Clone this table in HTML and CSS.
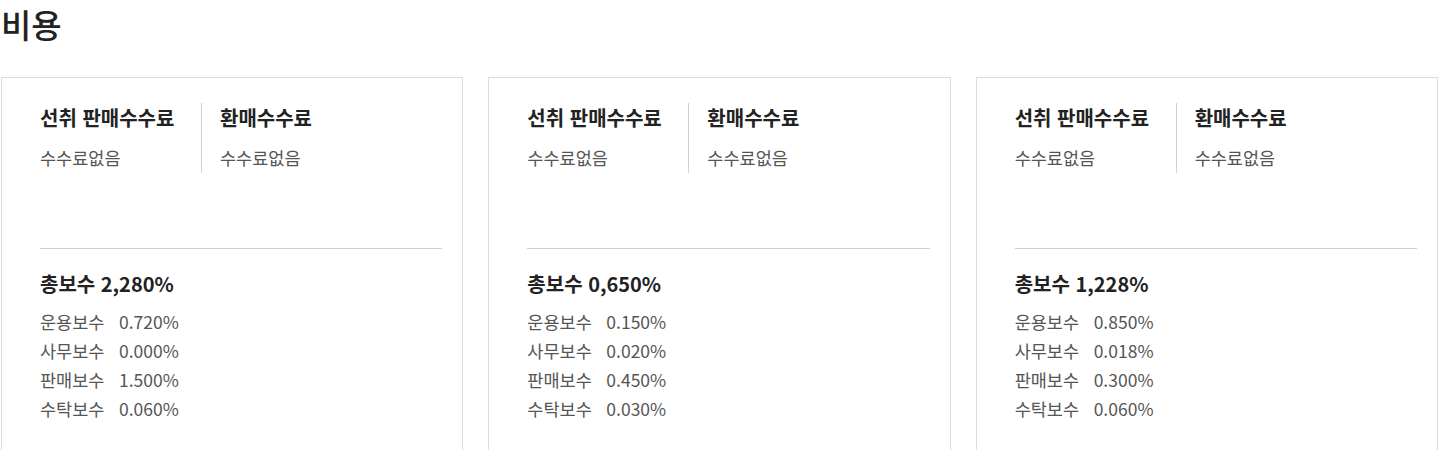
FILE: index.html
```html
<!DOCTYPE html>
<html lang="ko">
<head>
  <meta charset="UTF-8">
  <title>비용</title>
  <link rel="stylesheet" href="styles.css">
</head>
<body>

<h2 class="section-title">비용</h2>

<div class="cost-cards">
  <!-- card 1 -->
  <div class="cost-card">
    <div class="fees">
      <div class="fee-col">
        <div class="fee-title">선취 판매수수료</div>
        <div class="fee-text">수수료없음</div>
      </div>
      <div class="fee-col fee-col-right">
        <div class="fee-title">환매수수료</div>
        <div class="fee-text">수수료없음</div>
      </div>
    </div>
    <div class="total">총보수 2,280%</div>
    <ul class="pay-list">
      <li><span class="pay-label">운용보수</span>0.720%</li>
      <li><span class="pay-label">사무보수</span>0.000%</li>
      <li><span class="pay-label">판매보수</span>1.500%</li>
      <li><span class="pay-label">수탁보수</span>0.060%</li>
    </ul>
  </div>

  <!-- card 2 -->
  <div class="cost-card">
    <div class="fees">
      <div class="fee-col">
        <div class="fee-title">선취 판매수수료</div>
        <div class="fee-text">수수료없음</div>
      </div>
      <div class="fee-col fee-col-right">
        <div class="fee-title">환매수수료</div>
        <div class="fee-text">수수료없음</div>
      </div>
    </div>
    <div class="total">총보수 0,650%</div>
    <ul class="pay-list">
      <li><span class="pay-label">운용보수</span>0.150%</li>
      <li><span class="pay-label">사무보수</span>0.020%</li>
      <li><span class="pay-label">판매보수</span>0.450%</li>
      <li><span class="pay-label">수탁보수</span>0.030%</li>
    </ul>
  </div>

  <!-- card 3 -->
  <div class="cost-card">
    <div class="fees">
      <div class="fee-col">
        <div class="fee-title">선취 판매수수료</div>
        <div class="fee-text">수수료없음</div>
      </div>
      <div class="fee-col fee-col-right">
        <div class="fee-title">환매수수료</div>
        <div class="fee-text">수수료없음</div>
      </div>
    </div>
    <div class="total">총보수 1,228%</div>
    <ul class="pay-list">
      <li><span class="pay-label">운용보수</span>0.850%</li>
      <li><span class="pay-label">사무보수</span>0.018%</li>
      <li><span class="pay-label">판매보수</span>0.300%</li>
      <li><span class="pay-label">수탁보수</span>0.060%</li>
    </ul>
  </div>
</div>

</body>
</html>
```

FILE: styles.css
```css
body {
  margin: 0;
  padding: 0 1px;
  background: #fff;
  color: #333;
  font-family: "Noto Sans CJK KR", "Noto Sans", sans-serif;
}

.section-title {
  margin: 0;
  font-size: 33px;
  line-height: 48px;
  font-weight: 500;
  color: #222;
}

.cost-cards {
  display: grid;
  grid-template-columns: repeat(3, 1fr);
  gap: 25px;
  margin-top: 29px;
}

.cost-card {
  border: 1px solid #dcdcdc;
  padding: 25px 20px 60px 38px;
}

.fees {
  display: flex;
  padding-bottom: 75px;
  border-bottom: 1px solid #d0d0d0;
}

.fee-col {
  width: 161px;
}

.fee-col-right {
  width: auto;
  padding-left: 18px;
  border-left: 1px solid #d0d0d0;
}

.fee-title {
  font-size: 20px;
  line-height: 30px;
  font-weight: 700;
  color: #222;
}

.fee-text {
  margin-top: 10px;
  font-size: 17.5px;
  line-height: 30px;
  color: #555;
}

.total {
  margin-top: 20px;
  font-size: 20px;
  line-height: 30px;
  font-weight: 700;
  color: #222;
}

.pay-list {
  list-style: none;
  margin: 8px 0 0;
  padding: 0;
}

.pay-list li {
  font-size: 17.5px;
  line-height: 29px;
  color: #555;
}

.pay-label {
  display: inline-block;
  width: 79px;
}
```
